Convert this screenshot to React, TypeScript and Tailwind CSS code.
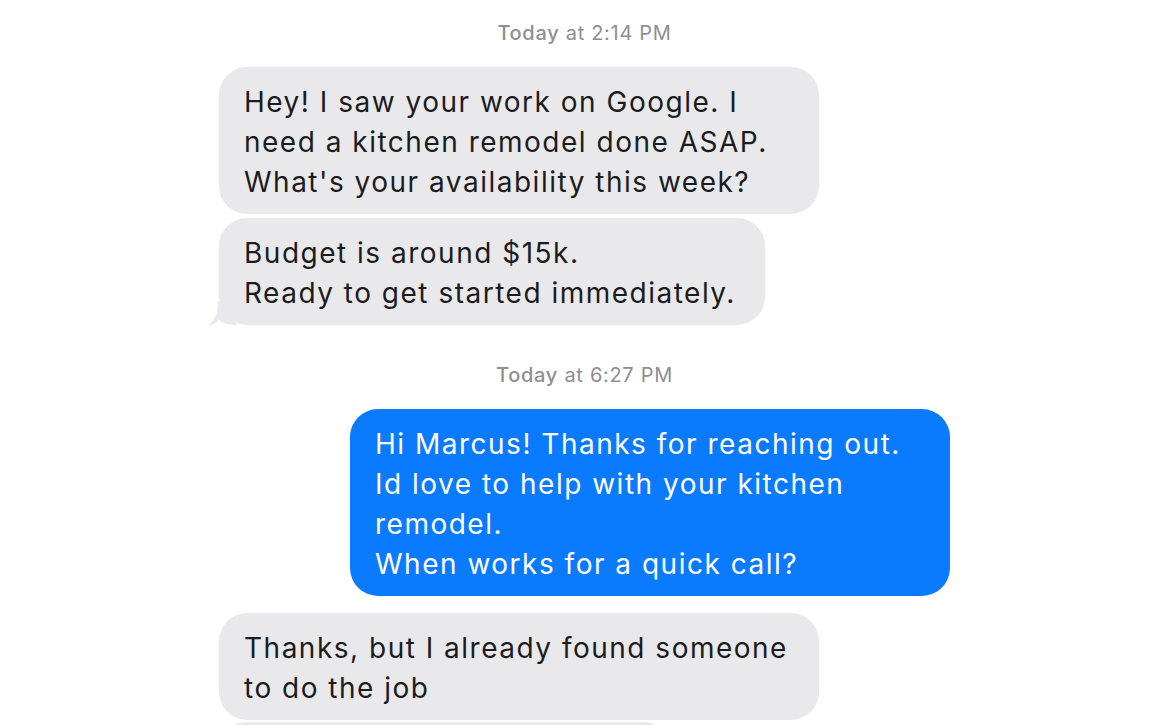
import React from "react";

const font = { fontFamily: "Inter, 'Noto Sans', sans-serif" };

const Stamp = ({ time, className }: { time: string; className: string }) => (
  <div
    className={`text-center text-[20px] leading-[24px] tracking-[0.7px] text-[#8e8e93] ${className}`}
  >
    <span className="font-medium">Today</span> at {time}
  </div>
);

const Tail = () => (
  <svg
    className="absolute -left-[11px] bottom-0"
    width="30"
    height="24"
    viewBox="0 0 30 24"
  >
    <path d="M22 0 L22 10 C22 17 26 21 30 24 C22 24 16 23 11 19 C8 22 4 24 0 24 C6 20 10 14 10 0 Z" fill="#e9e9eb" />
  </svg>
);

const Received = ({
  lines,
  width,
  tail,
  className = "",
}: {
  lines: string[];
  width: string;
  tail?: boolean;
  className?: string;
}) => (
  <div className={`relative ${width} ${className}`}>
    {tail && <Tail />}
    <div className="relative rounded-[28px] bg-[#e9e9eb] px-[25px] pt-[15px] pb-[12px] text-[28px] leading-[40px] tracking-[1.5px] text-[#1c1c1e] whitespace-nowrap">
      {lines.map((l) => (
        <div key={l}>{l}</div>
      ))}
    </div>
  </div>
);

export default function App() {
  return (
    <div className="h-screen overflow-hidden bg-white" style={font}>
      <div className="ml-[219px] w-[731px] pt-[21px] flex flex-col">
        <Stamp time="2:14 PM" className="mb-[22px]" />
        <Received
          width="w-[600px]"
          lines={[
            "Hey! I saw your work on Google. I",
            "need a kitchen remodel done ASAP.",
            "What's your availability this week?",
          ]}
        />
        <Received
          width="w-[546px]"
          tail
          className="mt-[4px]"
          lines={["Budget is around $15k.", "Ready to get started immediately."]}
        />
        <Stamp time="6:27 PM" className="mt-[38px] mb-[22px]" />
        <div className="self-end w-[600px] rounded-[28px] bg-[#0a7aff] px-[25px] pt-[15px] pb-[12px] text-[28px] leading-[40px] tracking-[1.5px] text-white whitespace-nowrap">
          <div>Hi Marcus! Thanks for reaching out.</div>
          <div>Id love to help with your kitchen</div>
          <div>remodel.</div>
          <div>When works for a quick call?</div>
        </div>
        <Received
          width="w-[600px]"
          className="mt-[17px]"
          lines={["Thanks, but I already found someone", "to do the job"]}
        />
        <div className="mt-[2px] h-[67px] w-[452px] rounded-[28px] bg-[#e9e9eb]" />
      </div>
    </div>
  );
}
